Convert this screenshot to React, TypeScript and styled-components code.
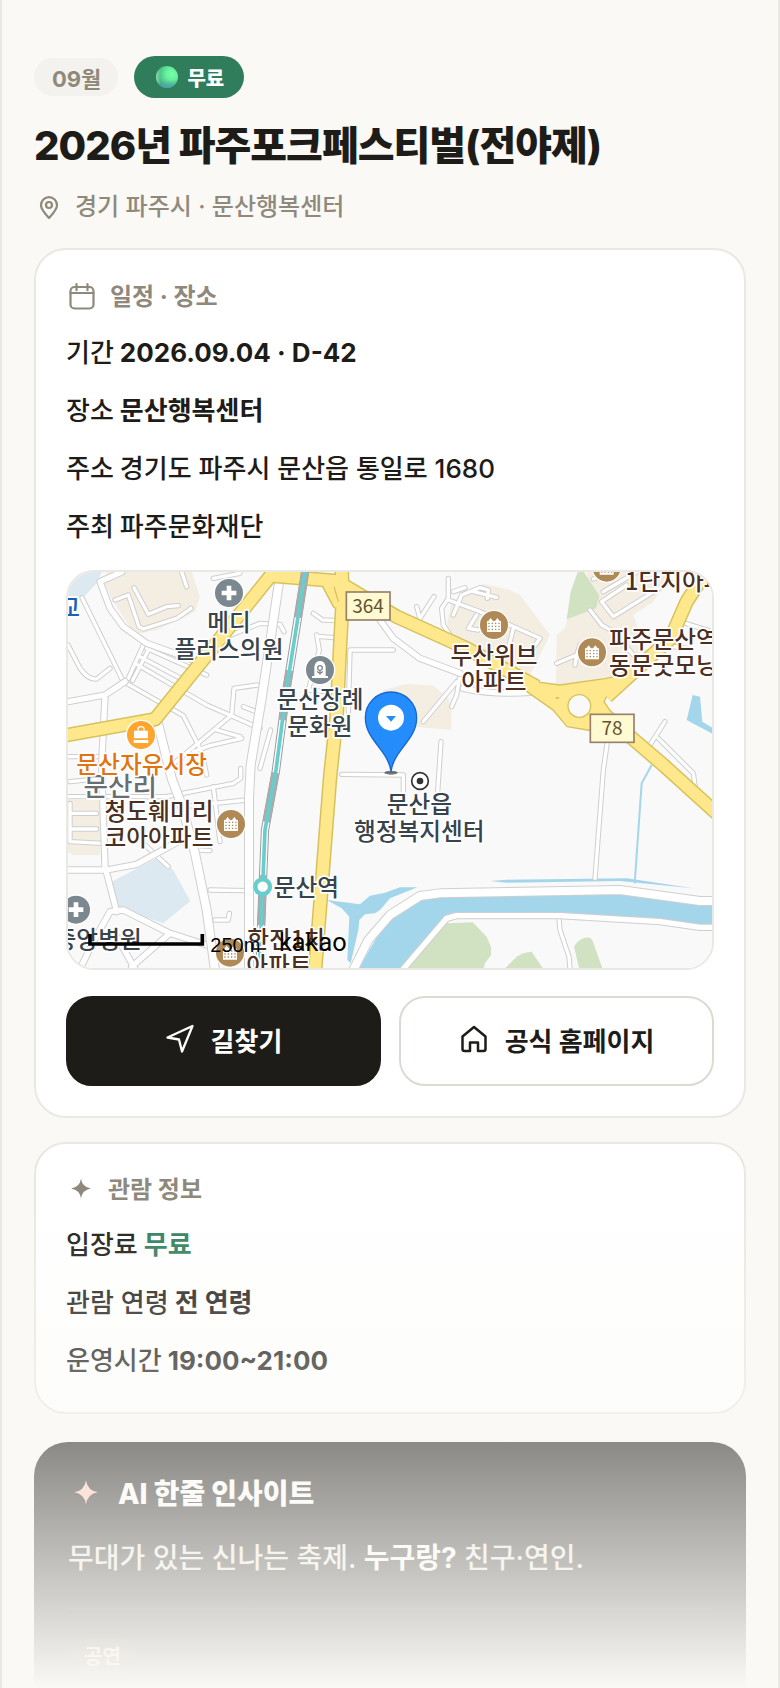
import React from "react";
import styled, { createGlobalStyle, css } from "styled-components";

const color = {
  page: "#faf9f5",
  surface: "#ffffff",
  ink: "#1d1c18",
  muted: "#8f897c",
  line: "#eae8e2",
  lineStrong: "#dcdad2",
  chip: "#f3f2ee",
  green: "#2f7d5b",
};

const GlobalStyle = createGlobalStyle`
  *, *::before, *::after { box-sizing: border-box; }
  body {
    margin: 0;
    background: ${color.page};
    color: ${color.ink};
    font-family: Inter, "Noto Sans CJK KR", sans-serif;
  }
  h1, h2, p, dl, dd { margin: 0; }
`;

const Page = styled.main`
  position: relative;
  display: flex;
  flex-direction: column;
  height: 100vh;
  overflow: hidden;
  padding: 56px 32px 0;
  border: solid ${color.line};
  border-width: 0 2px;
`;

const Fade = styled.div`
  position: absolute;
  inset: auto 0 0;
  height: 488px;
  background: linear-gradient(rgba(250, 249, 245, 0), ${color.page});
  pointer-events: none;
`;

const Chips = styled.div`
  display: flex;
  align-items: center;
  gap: 16px;
`;

const Chip = styled.span<{ $free?: boolean }>`
  display: inline-flex;
  align-items: center;
  height: 38px;
  padding: 0 17px 0 18px;
  border-radius: 21px;
  background: ${color.chip};
  color: ${color.muted};
  font-size: 22px;
  font-weight: 700;
  ${(p) =>
    p.$free &&
    css`
      gap: 9px;
      height: 42px;
      padding: 0 20px 0 22px;
      background: ${color.green};
      color: #fff;
      font-size: 20px;
      font-weight: 800;
    `}
`;

const Title = styled.h1`
  margin-top: 20px;
  font-size: 40px;
  line-height: 56px;
  font-weight: 800;
  letter-spacing: -1px;
`;

const Place = styled.p`
  display: flex;
  align-items: center;
  gap: 14px;
  margin-top: 16px;
  padding-left: 3px;
  color: ${color.muted};
  font-size: 24px;
  line-height: 34px;
  font-weight: 500;
`;

const Card = styled.section`
  flex: none;
  margin-top: 24px;
  padding: 30px;
  border: 2px solid ${color.line};
  border-radius: 32px;
  background: ${color.surface};
`;

const CardTitle = styled.h2`
  display: flex;
  align-items: center;
  gap: 12px;
  margin-bottom: 18px;
  color: ${color.muted};
  font-size: 24px;
  line-height: 32px;
  font-weight: 700;
`;

const Facts = styled.dl`
  display: flex;
  flex-direction: column;
  gap: 16px;
`;

const Fact = styled.div`
  display: flex;
  gap: 6px;
  font-size: 26px;
  line-height: 42px;
  font-weight: 500;
`;

const FactValue = styled.dd<{ $strong?: boolean; $green?: boolean }>`
  font-weight: ${(p) => (p.$strong ? 700 : 500)};
  color: ${(p) => (p.$green ? color.green : "inherit")};
`;

const MapFrame = styled.div`
  height: 400px;
  margin-top: 22px;
  border: 2px solid ${color.line};
  border-radius: 28px;
  overflow: hidden;

  svg {
    display: block;
    width: 100%;
    height: 100%;
  }
`;

const Actions = styled.div`
  display: grid;
  grid-template-columns: 1fr 1fr;
  gap: 18px;
  margin-top: 26px;
`;

const Action = styled.a<{ $primary?: boolean }>`
  display: flex;
  align-items: center;
  justify-content: center;
  gap: 16px;
  height: 90px;
  padding-bottom: 4px;
  border: 2px solid ${(p) => (p.$primary ? color.ink : color.lineStrong)};
  border-radius: 26px;
  background: ${(p) => (p.$primary ? color.ink : color.surface)};
  color: ${(p) => (p.$primary ? "#fff" : color.ink)};
  font-size: 26px;
  font-weight: 700;
  text-decoration: none;
`;

const Insight = styled.section`
  flex: none;
  margin-top: 28px;
  padding: 34px 34px 48px;
  border-radius: 34px;
  background: ${color.ink};
  color: #fff;
`;

const InsightTitle = styled.h2`
  display: flex;
  align-items: center;
  gap: 14px;
  font-size: 28px;
  line-height: 36px;
  font-weight: 800;
`;

const InsightText = styled.p`
  margin-top: 22px;
  color: #e9e7e0;
  font-size: 28px;
  line-height: 48px;
  font-weight: 500;

  strong {
    color: #fff;
    font-weight: 700;
  }
`;

const Tags = styled.div`
  display: flex;
  margin-top: 26px;
  padding-top: 28px;
  border-top: 2px solid rgba(255, 255, 255, 0.06);
`;

const Tag = styled.span`
  padding: 4px 16px;
  border-radius: 20px;
  background: #33251f;
  color: #ffc4b3;
  font-size: 20px;
  line-height: 30px;
  font-weight: 700;
`;

const FreeDot = () => (
  <svg width="22" height="22" viewBox="0 0 22 22" aria-hidden="true">
    <defs>
      <radialGradient id="dot-face" cx="0.72" cy="0.36" r="0.75">
        <stop offset="0" stopColor="#76ffaa" />
        <stop offset="0.35" stopColor="#68f09c" />
        <stop offset="0.8" stopColor="#46bd85" />
        <stop offset="1" stopColor="#4aa58c" />
      </radialGradient>
      <linearGradient id="dot-base" x1="0" y1="0" x2="0" y2="1">
        <stop offset="0.65" stopColor="#4f9db0" stopOpacity="0" />
        <stop offset="1" stopColor="#4f9db0" stopOpacity="0.9" />
      </linearGradient>
      <linearGradient id="dot-rim" x1="0" y1="0" x2="1" y2="0">
        <stop offset="0" stopColor="#a5e6b4" stopOpacity="0.8" />
        <stop offset="0.2" stopColor="#a5e6b4" stopOpacity="0" />
      </linearGradient>
    </defs>
    <circle cx="11" cy="11" r="11" fill="url(#dot-face)" />
    <circle cx="11" cy="11" r="11" fill="url(#dot-base)" />
    <circle cx="11" cy="11" r="11" fill="url(#dot-rim)" />
  </svg>
);

const PinIcon = () => (
  <svg width="24" height="24" viewBox="0 0 24 24" fill="none" stroke="currentColor" strokeWidth="2.200" strokeLinejoin="round" aria-hidden="true">
    <path d="M12 23C8 18.500 4 14.500 4 10.200a8 8 0 0 1 16 0C20 14.500 16 18.500 12 23Z" />
    <circle cx="12" cy="10" r="3" />
  </svg>
);

const CalendarIcon = () => (
  <svg width="32" height="34" viewBox="0 0 32 34" fill="none" stroke="currentColor" strokeWidth="2.200" strokeLinecap="round" aria-hidden="true">
    <rect x="4.500" y="7" width="23" height="21.500" rx="4" />
    <path d="M4.500 13h23M10.500 4.200v6M21.500 4.200v6" />
  </svg>
);

const Sparkle = ({ size, fill = "currentColor" }: { size: number; fill?: string }) => (
  <svg width={size} height={size} viewBox="0 0 32 32" fill={fill} aria-hidden="true">
    <path d="M16 4Q17.500 13 26.500 14.500Q17.500 16 16 25Q14.500 16 5.500 14.500Q14.500 13 16 4Z" />
  </svg>
);

const RouteIcon = () => (
  <svg width="30" height="30" viewBox="0 0 30 30" fill="none" stroke="currentColor" strokeWidth="2.300" strokeLinejoin="round" aria-hidden="true">
    <path d="M27.500 2 2.500 13.500 14 15.500 17 27.500Z" />
  </svg>
);

const HomeIcon = () => (
  <svg width="30" height="30" viewBox="0 0 30 30" fill="none" stroke="currentColor" strokeWidth="2.500" strokeLinejoin="round" aria-hidden="true">
    <path d="M3.500 12.500 15 3l11.500 9.500V25a2 2 0 0 1-2 2H19v-8.500h-8V27H5.500a2 2 0 0 1-2-2Z" />
  </svg>
);

/* District map. Streets are grouped by width and drawn twice: casing, then fill. */

const narrowStreets = [
  "M66 98 190 350M165 105 205 90 237 185 250 192 350 160 393 130",
  "M222 68 265 148 320 125 355 122",
  "M24 240 60 310Q85 345 110 342L150 310",
  "M200 355 370 452 425 560 440 630",
  "M225 295 440 420 600 490M260 250 440 330M240 275 390 355M205 340 250 240M218 346 268 250",
  "M592 360 522 370 515 450 330 605M500 215 600 175 660 178 672 200",
  "M400 560 450 542 545 520M470 495 540 515M550 425 600 445M632 495 600 610",
  "M460 40 540 25M365 21 380 65M760 145 788 165 840 167M770 210 778 255 745 375M775 214 822 218M745 375 800 380",
  "M875 255 1000 255M870 255 865 440M845 628 1030 630V680",
  "M24 575 120 575M24 695 320 695 520 655 542 640V610M30 650 130 640",
  "M30 745 110 745M30 792 110 792M30 715V830L130 835",
  "M450 975 560 977M465 1065 505 1065 508 1045M460 665 480 830M370 725 560 705M410 855 450 857M250 835 325 905",
  "M1165 40V100L1145 130 1150 180 1170 210M1165 105 1260 140 1440 220 1415 255",
  "M1180 150 1205 90 1260 68 1285 75 1282 100M1180 80 1215 68M1240 80 1310 97M1250 150 1225 190 1255 195M1070 125 1080 160 1122 95M1360 190 1345 250",
  "M1200 330 1190 390 1175 425M1190 350 1090 470M1590 135 1625 180 1660 200 1720 270",
  "M1700 60 1625 110 1660 155 1830 50M1630 80 1730 21M1490 295 1550 270 1560 240M1550 272 1545 300M1600 42 1660 21",
  "M1860 170 1956 200M1810 240 1890 252M1642 530 1630 615 1605 940M1143 530 1133 680",
  "M1815 470 1760 555M1795 520 1900 625 1907 675M1497 1060 1500 1095 1527 1175 1530 1212",
];

const wideStreets = [
  "M185 21 120 50 150 130 190 185 260 235 400 285",
  "M24 410 135 390 195 350M135 390 125 600 135 905 170 1040M24 915 140 915 230 898 400 805",
  "M60 1212 100 1130 150 1040 190 1035 330 1105 440 1140M330 1105 215 1205M170 1115 225 1212",
  "M960 165 1000 220 1080 280 1200 325M1210 370Q1300 390 1410 382",
  "M1030 1212 1160 1060 1190 1052 1500 1052 1800 1070 1920 1087 1960 1087",
];

const mainStreets = [
  "M658 45 635 200 605 400 572 600 567 700V1215",
  "M295 480 335 640 365 720 405 865 440 1035 465 1215",
  "M880 1215 925 1125 990 1050 1080 993 1140 985 1680 975 1920 1008 1960 1008",
];

const Streets = ({ paths, width }: { paths: string[]; width: number }) => (
  <g fill="none" strokeLinecap="round" strokeLinejoin="round">
    {paths.map((d) => (
      <path key={d} d={d} stroke="#cfcfcf" strokeWidth={width + 6} />
    ))}
    {paths.map((d) => (
      <path key={d} d={d} stroke="#ffffff" strokeWidth={width} />
    ))}
  </g>
);

const highways = [
  "M10 512 285 463 632 32 830 48 1010 155 1220 250 1430 365",
  "M845 10 848 100 840 250 830 450 810 640 765 1220",
  "M1640 395 1760 285 1832 220 1880 110 1925 40",
  "M1600 420 1810 600 1970 745",
  "M800 45 840 120",
];

const roundabout = "M1390 325 1440 354 1500 362 1640 342 1690 330 1648 375 1630 410 1660 455 1600 496 1522 483 1480 433 1390 370Z";

type Spot = { x: number; y: number; kind: "clinic" | "hall" | "market" | "flats" };

const spots: Spot[] = [
  { x: 507, y: 84, kind: "clinic" },
  { x: 48, y: 1034, kind: "clinic" },
  { x: 780, y: 315, kind: "hall" },
  { x: 243, y: 510, kind: "market" },
  { x: 513, y: 777, kind: "flats" },
  { x: 510, y: 1163, kind: "flats" },
  { x: 1302, y: 180, kind: "flats" },
  { x: 1596, y: 262, kind: "flats" },
  { x: 1640, y: 8, kind: "flats" },
];

const spotFill = { clinic: "#7b888f", hall: "#7b888f", market: "#ffa42c", flats: "#b08a56" };

const SpotMark = ({ x, y, kind }: Spot) => (
  <g transform={`translate(${x} ${y})`}>
    <circle r="44" fill={spotFill[kind]} stroke="#fff" strokeWidth="4" />
    {kind === "clinic" && <path d="M-7-22H7V-7H22V7H7V22H-7V7H-22V-7H-7Z" fill="#fff" />}
    {kind === "hall" && (
      <>
        <path d="M-17 18V-10Q-14-27 0-27T17-10V18H24V24H-24V18Z" fill="#fff" />
        <circle cy="-6" r="7" fill="none" stroke={spotFill.hall} strokeWidth="4" />
        <path d="M-9 4Q0 14 9 4M0 3V14" fill="none" stroke={spotFill.hall} strokeWidth="4" />
      </>
    )}
    {kind === "market" && (
      <>
        <path d="M-9-12V-18Q-9-25 0-25T9-18V-12" fill="none" stroke="#fff" strokeWidth="4" />
        <path d="M-21-13H21V10H-21ZM-22 15H22V24H-22Z" fill="#fff" />
      </>
    )}
    {kind === "flats" && (
      <>
        <path d="M-21 21V-12H-17L-10-21-3-12H3L10-21 17-12H21V21Z" fill="#fff" />
        <path d="M-17-5H17M-17 4H17M-17 13H17" stroke={spotFill.flats} strokeWidth="4" strokeDasharray="4 6" />
      </>
    )}
  </g>
);

type Label = { x: number; y: number; lines: string[]; fill?: string; anchor?: "start" | "middle" | "end"; size?: number };

const slate = "#37444b";
const brown = "#4b2f22";

const labels: Label[] = [
  { x: 181, y: 693, lines: ["문산리"], fill: "#6a6e72", size: 80 },
  { x: 60, y: 154, lines: ["중학교"], fill: "#1c62b0", anchor: "end" },
  { x: 507, y: 199, lines: ["메디", "플러스의원"] },
  { x: 780, y: 430, lines: ["문산장례", "문화원"] },
  { x: 245, y: 624, lines: ["문산자유시장"], fill: "#e27410" },
  { x: 297, y: 765, lines: ["청도훼미리", "코아아파트"], fill: brown },
  { x: 1302, y: 296, lines: ["두산위브", "아파트"], fill: brown },
  { x: 1647, y: 248, lines: ["파주문산역", "동문굿모닝힐"], fill: brown, anchor: "start" },
  { x: 1695, y: 76, lines: ["1단지아파트"], fill: brown, anchor: "start" },
  { x: 1078, y: 745, lines: ["문산읍", "행정복지센터"] },
  { x: 641, y: 993, lines: ["문산역"], anchor: "start" },
  { x: 245, y: 1150, lines: ["중앙병원"], anchor: "end" },
  { x: 680, y: 1148, lines: ["한진1차"], fill: brown },
  { x: 657, y: 1228, lines: ["아파트"], fill: brown },
];

const MapLabel = ({ x, y, lines, fill = slate, anchor = "middle", size = 71 }: Label) => (
  <text
    fontFamily='"Noto Sans CJK KR", sans-serif'
    fontSize={size}
    fontWeight="500"
    textAnchor={anchor}
    fill={fill}
    stroke="#fff"
    strokeWidth="10"
    strokeLinejoin="round"
    paintOrder="stroke"
  >
    {lines.map((line, i) => (
      <tspan key={line} x={x} y={y + i * 79}>
        {line}
      </tspan>
    ))}
  </text>
);

const RoadSign = ({ x, y, children }: { x: number; y: number; children: string }) => (
  <g>
    <rect x={x} y={y} width="131" height="84" fill="#fffad2" stroke="#98816a" strokeWidth="5" />
    <text x={x + 65} y={y + 62} textAnchor="middle" fontFamily='"Noto Sans CJK KR", sans-serif' fontSize="57" fill="#66522c">
      {children}
    </text>
  </g>
);

const DistrictMap = () => (
  <svg viewBox="24 21 1932 1188" preserveAspectRatio="xMidYMid slice" role="img" aria-label="문산행복센터 지도">
    <rect x="-2000" y="-500" width="6000" height="3000" fill="#f9f9f9" />

    <g fill="#f3ede2">
      <path d="M140 21H395L420 95 405 140 350 168 290 195 240 205 212 190 160 110 135 60Z" />
      <path d="M24 705H120V870H40L24 860Z" />
      <path d="M1240 68 1270 57 1350 75 1380 90 1470 210 1410 330 1360 330 1170 240 1160 180 1175 110Z" />
      <path d="M970 375 1040 357 1120 362 1165 400 1174 440V495L1060 485 960 480Z" />
      <path d="M1580 21H1840L1780 110 1720 150 1760 260 1700 335 1488 360 1490 210 1515 190 1522 160 1600 130Z" />
    </g>
    <g fill="#dde9f1">
      <path d="M24 21H125L110 55 75 92 24 98Z" />
      <path d="M155 950 290 880 340 915 391 1008 310 1075 190 1035 172 1035Z" />
    </g>
    <g fill="#d1e2c2">
      <path d="M1553 21H1572L1618 92 1608 130 1520 163 1532 80Z" />
      <path d="M1160 1075 1238 1072 1280 1115 1293 1145V1170L1275 1195 1270 1212H1040Z" />
      <path d="M1335 1210 1370 1175Q1390 1162 1415 1160L1450 1212Z" />
      <path d="M1542 1145Q1560 1115 1590 1118L1597 1125 1628 1212H1558Z" />
    </g>
    <g fill="#a3d6eb">
      <path d="M895 1212 960 1100 1010 1040 1080 1005 1140 998 1680 985 1920 1020H1960V1082H1920L1805 1065 1550 1055 1500 1045 1190 1047 1160 1055 1020 1212Z" />
      <path d="M800 1005 900 1018 930 992 975 983 1020 967H1072L990 1000 960 1035 945 1045 915 1048 898 1065 895 1095 872 1195 862 1185 868 1055 845 1030Z" />
      <path d="M1290 948 1340 944 1700 940 1900 970 1860 966 1680 948 1340 953Z" />
      <path d="M1898 390 1920 395 1927 470 1960 490V508L1880 465Z" />
    </g>
    <path d="M1724 955 1745 655 1775 600" fill="none" stroke="#a3d6eb" strokeWidth="6" />

    <Streets paths={narrowStreets} width={10} />
    <Streets paths={wideStreets} width={16} />
    <Streets paths={mainStreets} width={24} />

    <g fill="none" strokeLinejoin="round">
      {highways.map((d) => (
        <path key={d} d={d} stroke="#d6c25c" strokeWidth="44" />
      ))}
      <path d={roundabout} stroke="#d6c25c" strokeWidth="8" />
      {highways.map((d) => (
        <path key={d} d={d} stroke="#ffe88b" strokeWidth="35" />
      ))}
      <path d={roundabout} fill="#ffe88b" />
      <path d="M822 65 835 110" stroke="#d6c25c" strokeWidth="4" />
      <circle cx="1558" cy="423" r="34" fill="#f9f9f9" stroke="#d6c25c" strokeWidth="4" />
      <path d="M1485 396H1499L1492 404Z" fill="#d6c25c" />
    </g>

    <g fill="none">
      {[
        { stroke: "#9d9d9d", strokeWidth: 25 },
        { stroke: "#ffffff", strokeWidth: 19 },
        { stroke: "#ababab", strokeWidth: 23, strokeDasharray: "150 160" },
        { stroke: "#69cdcd", strokeWidth: 11 },
      ].map((line) => (
        <path key={line.strokeWidth} d="M737 10 715 150 680 370 648 615 615 795 608 965 598 1220" {...line} />
      ))}
      <circle cx="608" cy="965" r="22" fill="#fff" stroke="#69cdcd" strokeWidth="13" />
    </g>

    {spots.map((s) => (
      <SpotMark key={`${s.x}-${s.y}`} {...s} />
    ))}
    {labels.map((l) => (
      <MapLabel key={`${l.x}-${l.y}`} {...l} />
    ))}
    <RoadSign x={859} y={81}>364</RoadSign>
    <RoadSign x={1591} y={448}>78</RoadSign>

    <circle cx="1080" cy="648" r="25" fill="#fff" stroke="#333" strokeWidth="5" />
    <circle cx="1080" cy="648" r="10" fill="#333" />

    <ellipse cx="993" cy="623" rx="20" ry="6" fill="#222" opacity="0.6" />
    <path d="M993 620C985 555 916 525 916 458a77 77 0 0 1 154 0C1070 525 1001 555 993 620Z" fill="#258cfb" stroke="#1767d2" strokeWidth="4" />
    <circle cx="993" cy="458" r="39" fill="#fff" />
    <path d="M978 453H1008L993 470Z" fill="#258cfb" />

    <path d="M90 1107V1137H427V1107" fill="none" stroke="#000" strokeWidth="11" />
    <text x="451" y="1160" fontFamily='"Liberation Sans", sans-serif' fontSize="60" fill="#000">
      250m
    </text>
    <text x="657" y="1157" fontFamily="Roboto, sans-serif" fontSize="76" fill="#000">
      kakao
    </text>
  </svg>
);

export default function App() {
  return (
    <>
      <GlobalStyle />
      <Page>
        <Chips>
          <Chip>09월</Chip>
          <Chip $free>
            <FreeDot />
            무료
          </Chip>
        </Chips>
        <Title>2026년 파주포크페스티벌(전야제)</Title>
        <Place>
          <PinIcon />
          경기 파주시 · 문산행복센터
        </Place>

        <Card>
          <CardTitle>
            <CalendarIcon />
            일정 · 장소
          </CardTitle>
          <Facts>
            <Fact>
              <dt>기간</dt>
              <FactValue $strong>2026.09.04 · D-42</FactValue>
            </Fact>
            <Fact>
              <dt>장소</dt>
              <FactValue $strong>문산행복센터</FactValue>
            </Fact>
            <Fact>
              <dt>주소</dt>
              <FactValue>경기도 파주시 문산읍 통일로 1680</FactValue>
            </Fact>
            <Fact>
              <dt>주최</dt>
              <FactValue>파주문화재단</FactValue>
            </Fact>
          </Facts>
          <MapFrame>
            <DistrictMap />
          </MapFrame>
          <Actions>
            <Action href="#directions" $primary>
              <RouteIcon />
              길찾기
            </Action>
            <Action href="#homepage">
              <HomeIcon />
              공식 홈페이지
            </Action>
          </Actions>
        </Card>

        <Card>
          <CardTitle>
            <Sparkle size={30} />
            관람 정보
          </CardTitle>
          <Facts>
            <Fact>
              <dt>입장료</dt>
              <FactValue $strong $green>무료</FactValue>
            </Fact>
            <Fact>
              <dt>관람 연령</dt>
              <FactValue $strong>전 연령</FactValue>
            </Fact>
            <Fact>
              <dt>운영시간</dt>
              <FactValue $strong>19:00~21:00</FactValue>
            </Fact>
          </Facts>
        </Card>

        <Insight>
          <InsightTitle>
            <Sparkle size={36} fill="#ffc4b3" />
            AI 한줄 인사이트
          </InsightTitle>
          <InsightText>
            무대가 있는 신나는 축제. <strong>누구랑?</strong> 친구·연인.
          </InsightText>
          <Tags>
            <Tag>공연</Tag>
          </Tags>
        </Insight>
        <Fade />
      </Page>
    </>
  );
}
